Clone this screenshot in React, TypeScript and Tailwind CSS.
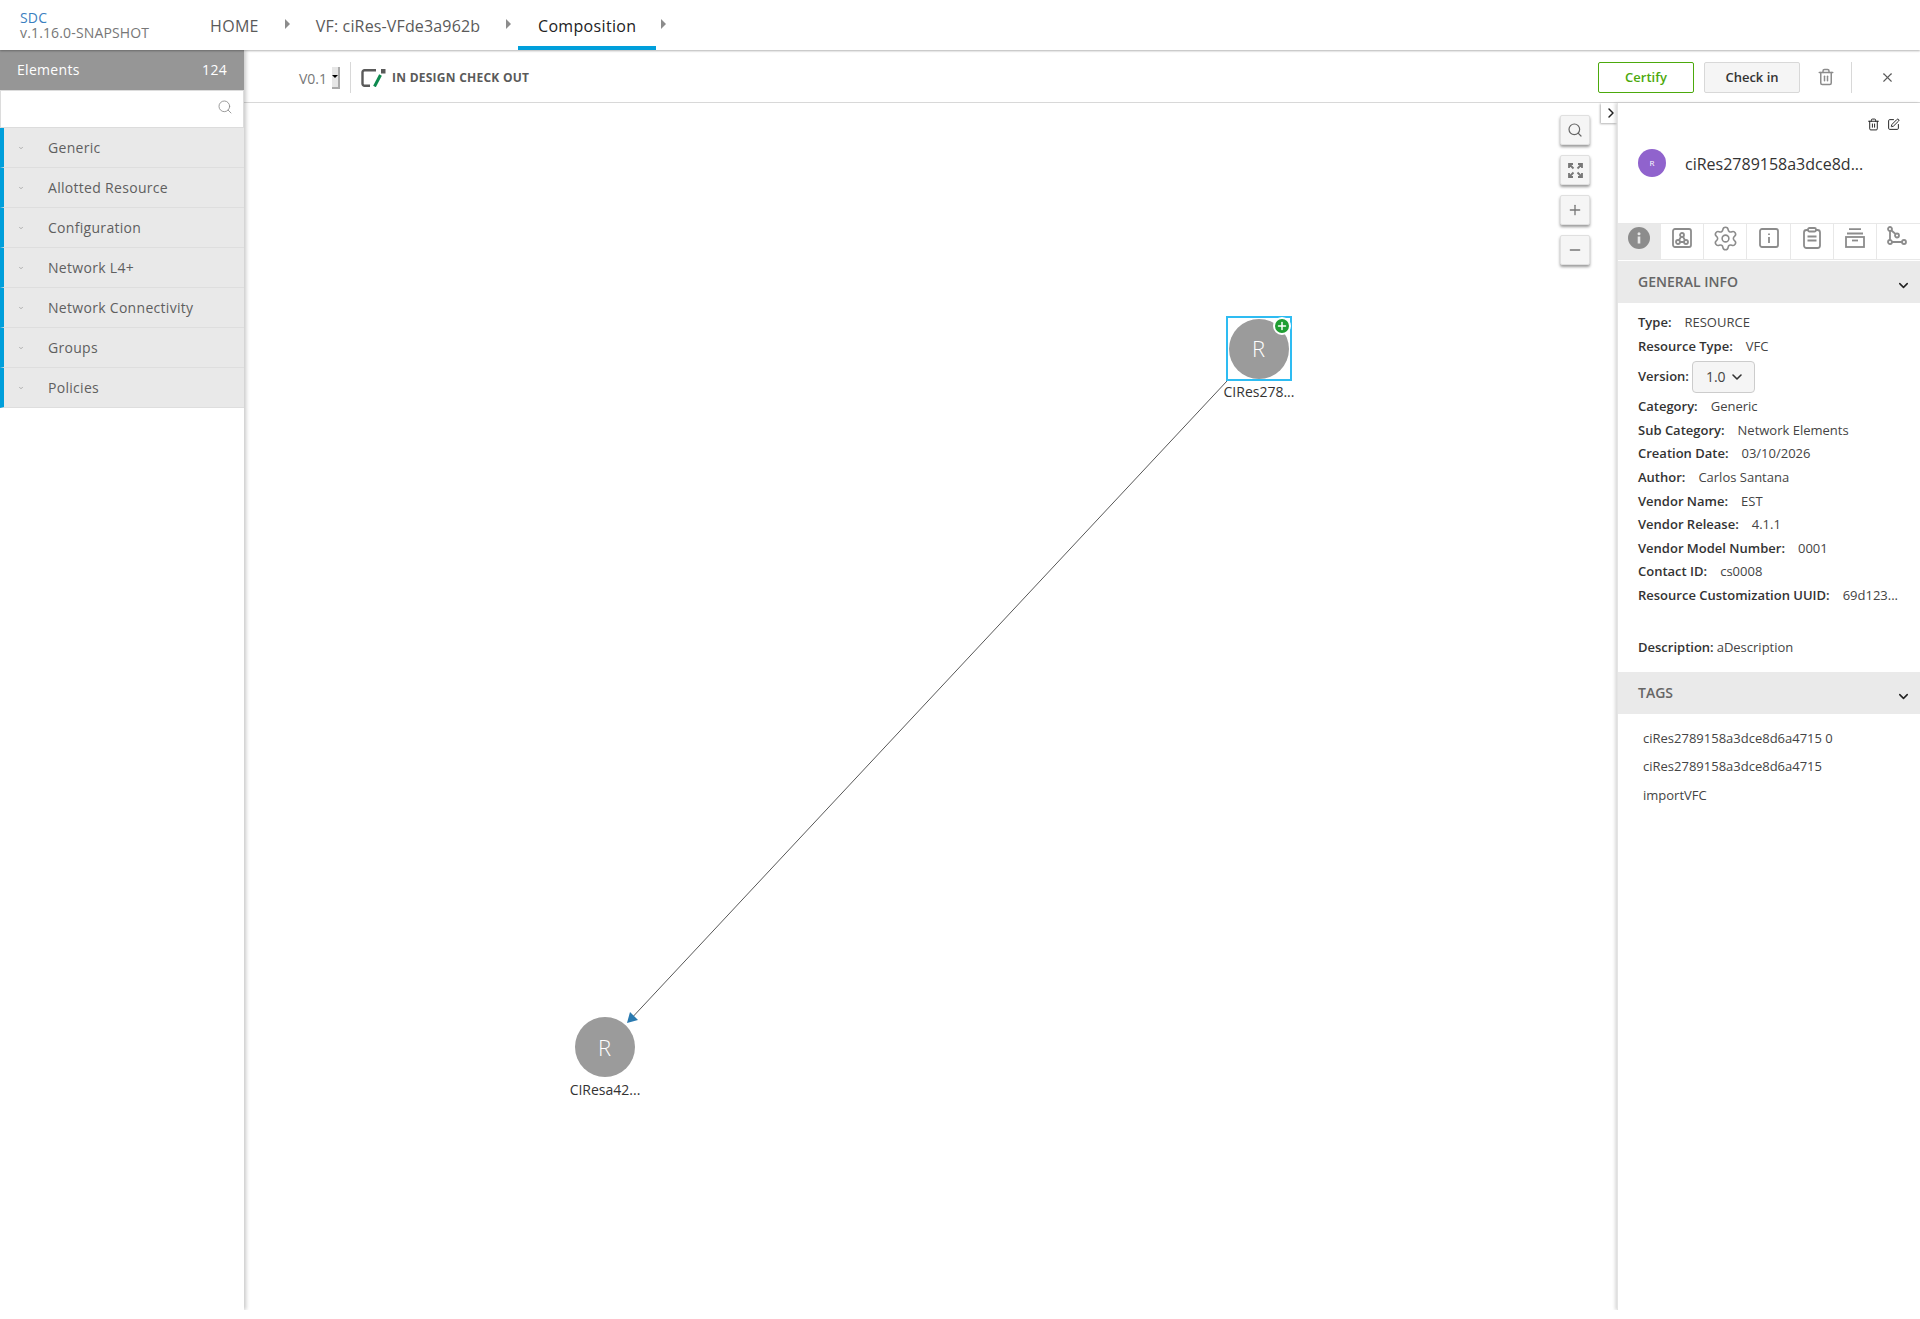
import { ChevronDown, ChevronRight, Minus, Plus, Search, Settings, SquarePen, Trash2, X } from 'lucide-react'

const categories = ['Generic', 'Allotted Resource', 'Configuration', 'Network L4+', 'Network Connectivity', 'Groups', 'Policies']

const infoRows = [
  { label: 'Category:', value: 'Generic' },
  { label: 'Sub Category:', value: 'Network Elements' },
  { label: 'Creation Date:', value: '03/10/2026' },
  { label: 'Author:', value: 'Carlos Santana' },
  { label: 'Vendor Name:', value: 'EST' },
  { label: 'Vendor Release:', value: '4.1.1' },
  { label: 'Vendor Model Number:', value: '0001' },
  { label: 'Contact ID:', value: 'cs0008' },
  { label: 'Resource Customization UUID:', value: '69d123...' },
]

const tags = ['ciRes2789158a3dce8d6a4715 0', 'ciRes2789158a3dce8d6a4715', 'importVFC']

function InfoFilled() {
  return (
    <svg width="22" height="22" viewBox="0 0 22 22">
      <circle cx="11" cy="11" r="11" fill="#8c8c8c" />
      <rect x="9.700" y="9.500" width="2.600" height="7" fill="#e6e6e6" />
      <circle cx="11" cy="6.800" r="1.500" fill="#e6e6e6" />
    </svg>
  )
}

function CompositionIcon() {
  return (
    <svg width="20" height="20" viewBox="0 0 20 20" fill="none" stroke="#8c8c8c" strokeWidth="1.800">
      <rect x="1" y="1" width="18" height="18" rx="2" />
      <circle cx="10" cy="7" r="2" />
      <circle cx="6" cy="14" r="2" />
      <circle cx="14" cy="14" r="2" />
      <path d="M9 8.800 7 12.200M11 8.800l2 3.400M8 14h4" />
    </svg>
  )
}

function SquareInfo() {
  return (
    <svg width="20" height="20" viewBox="0 0 20 20" fill="none" stroke="#8c8c8c" strokeWidth="1.800">
      <rect x="1" y="1" width="18" height="18" rx="2" />
      <path d="M10 9v6M10 5.500v1.500" />
    </svg>
  )
}

function ClipboardIcon() {
  return (
    <svg width="18" height="22" viewBox="0 0 18 22" fill="none" stroke="#8c8c8c" strokeWidth="1.800">
      <rect x="1" y="3" width="16" height="18" rx="2.500" />
      <rect x="5" y="1" width="8" height="3.500" rx="1.500" fill="#fff" />
      <path d="M4.500 9.500h9M4.500 13.500h9" />
    </svg>
  )
}

function ArchiveIcon() {
  return (
    <svg width="20" height="20" viewBox="0 0 20 20" fill="none" stroke="#8c8c8c" strokeWidth="1.800">
      <path d="M4 1.200h12M2 5.500h16" />
      <rect x="1" y="9" width="18" height="10" />
      <path d="M7 12.500h6" />
    </svg>
  )
}

function PathsIcon() {
  return (
    <svg width="20" height="22" viewBox="0 0 20 22" fill="none" stroke="#8c8c8c" strokeWidth="1.800">
      <circle cx="3" cy="3" r="2" />
      <circle cx="3" cy="16" r="2" />
      <circle cx="10" cy="9.500" r="2" />
      <circle cx="17" cy="16" r="2" />
      <path d="M3 5v9M5 16h10M4.500 4.500 8.500 8" />
    </svg>
  )
}

function ExpandIcon() {
  return (
    <svg width="15" height="15" viewBox="0 0 15 15" fill="none" stroke="#777" strokeWidth="1.800">
      <path d="M1 5V1h4M14 5V1h-4M1 10v4h4M14 10v4h-4M1.500 1.500l4 4M13.500 1.500l-4 4M1.500 13.500l4-4M13.500 13.500l-4-4" />
    </svg>
  )
}

function ZoomButton({ children }: { children: React.ReactNode }) {
  return (
    <div className="flex h-[30px] w-[30px] items-center justify-center rounded-[2px] border border-[#e0e0e0] bg-[#f5f5f5] shadow-[0_2px_3px_rgba(0,0,0,0.4)]">
      {children}
    </div>
  )
}

function SectionHeader({ title }: { title: string }) {
  return (
    <div className="flex h-[42px] items-center justify-between bg-[#eaeaea] pl-5 pr-[9px]">
      <span className="pb-px text-[14px] font-semibold text-[#666]">{title}</span>
      <ChevronDown className="mt-[7px] h-[15px] w-[15px] text-[#222]" strokeWidth={2.4} />
    </div>
  )
}

function InfoRow({ label, value }: { label: string; value: string }) {
  return (
    <div className="flex h-[23.6px] items-center whitespace-nowrap text-[13px] text-[#444]">
      <span className="mr-[13px] font-semibold text-[#333]">{label}</span>
      <span>{value}</span>
    </div>
  )
}

function NavArrow() {
  return <span className="mb-[3px] ml-[26px] h-0 w-0 border-y-[5px] border-l-[5px] border-y-transparent border-l-[#8c8c8c]" />
}

export default function App() {
  return (
    <div className="flex h-[1319px] w-[1920px] flex-col overflow-hidden bg-white font-['Open_Sans',sans-serif]">
      <header className="relative z-20 flex h-[50px] shrink-0 items-stretch bg-white shadow-[0_1px_2px_rgba(0,0,0,0.3)]">
        <div className="w-[210px] pl-5 pt-[10px] text-[14px] leading-[15px] tracking-[0.15px]">
          <div className="text-[#3b7fbf]">SDC</div>
          <div className="text-[#777]">v.1.16.0-SNAPSHOT</div>
        </div>
        <div className="flex items-center text-[16px] text-[#5a5a5a]">
          <span className="pt-px tracking-[0.33px]">HOME</span>
          <NavArrow />
          <span className="ml-[26px] pt-px tracking-[0.15px]">VF: ciRes-VFde3a962b</span>
          <NavArrow />
        </div>
        <div className="ml-[7px] flex w-[138px] items-center justify-center border-b-4 border-[#009fdb] pt-[6px] text-[16px] tracking-[0.33px] text-[#222]">
          Composition
        </div>
        <span className="ml-[5px] mt-[19px] h-0 w-0 border-y-[5px] border-l-[5px] border-y-transparent border-l-[#8c8c8c]" />
      </header>

      <div className="flex h-[1260px] shrink-0 overflow-hidden">
        <aside className="relative z-10 w-[244px] shrink-0 bg-white shadow-[2px_0_4px_rgba(0,0,0,0.22)]">
          <div className="flex h-[40px] items-center justify-between bg-[#969696] pb-[2px] pl-[17px] pr-[17px] text-[14px] font-medium tracking-[0.3px] text-white">
            <span>Elements</span>
            <span>124</span>
          </div>
          <div className="flex h-[38px] items-center justify-end border border-[#dcdcdc] bg-white pb-[4px] pr-[10px]">
            <Search className="h-4 w-4 text-[#8c8c8c]" strokeWidth={1.3} />
          </div>
          {categories.map((name) => (
            <div key={name} className="flex h-10 items-center border-b border-l-4 border-b-[#dedede] border-l-[#009fdb] bg-[#e9e9e9] text-[14px] tracking-[0.3px] text-[#5f5f5f]">
              <ChevronDown className="ml-[14px] mt-[1px] h-[6px] w-[6px] text-[#999]" strokeWidth={3} />
              <span className="ml-[24px]">{name}</span>
            </div>
          ))}
        </aside>

        <div className="flex min-w-0 flex-1 flex-col">
          <div className="flex h-[53px] shrink-0 items-center border-b border-[#d8d8d8] bg-white pr-[25px] pt-[2px]">
            <span className="ml-[55px] mt-[2px] text-[14px] text-[#777]">V0.1</span>
            <span className="ml-[5px] mt-[1px] flex h-[22px] w-[8px] items-center justify-center border-b-2 border-r-2 border-[#aaa] bg-[#e6e6e6]">
              <span className="h-0 w-0 border-x-[3px] border-t-[3px] border-x-transparent border-t-black" />
            </span>
            <span className="ml-[10px] h-[31px] w-px bg-[#d8d8d8]" />
            <svg className="ml-[10px] mt-[2px]" width="25" height="18" viewBox="0 0 25 18" fill="none">
              <path d="M15 1.300H3.500a2 2 0 0 0-2 2v11.400a2 2 0 0 0 2 2H9" stroke="#5a5a5a" strokeWidth="2.400" />
              <rect x="20" y="0" width="4.500" height="4.500" fill="#5a5a5a" />
              <path d="M19.500 6 13.500 17.500" stroke="#0d8a4f" strokeWidth="3" />
            </svg>
            <span className="ml-[6px] mt-[2px] text-[12px] font-bold tracking-[0.25px] text-[#5a5a5a]">IN DESIGN CHECK OUT</span>
            <div className="ml-auto flex items-center">
              <button className="h-[31px] w-[96px] rounded-[2px] border border-[#4ca90c] bg-white pt-[2px] text-[13px] font-semibold text-[#4ca90c]">Certify</button>
              <button className="ml-[10px] h-[31px] w-[96px] rounded-[2px] border border-[#d8d8d8] bg-[#f5f5f5] pt-[2px] text-[13px] font-semibold text-[#333]">Check in</button>
              <Trash2 className="ml-[17px] h-[18px] w-[18px] text-[#8c8c8c]" strokeWidth={2} />
              <span className="ml-4 h-[31px] w-px bg-[#d8d8d8]" />
              <X className="ml-[28px] h-[15px] w-[15px] text-[#5a5a5a]" strokeWidth={1.8} />
            </div>
          </div>

          <div className="flex min-h-0 flex-1">
            <div className="relative min-w-0 flex-1 bg-white">
              <svg className="absolute inset-0" width="1373" height="1200" fill="none">
                <path d="M983 278 384 919" stroke="#444" strokeWidth="0.900" />
                <path d="M383 920 386 909 394 917Z" fill="#2a7ab0" />
              </svg>

              <div className="absolute left-[982px] top-[213px] flex h-[65px] w-[66px] items-center justify-start border-2 border-[#2ebcf2] pl-px">
                <div className="flex h-[60px] w-[60px] items-center justify-center rounded-full bg-[#9b9b9b] pr-px text-[22px] font-light text-white">R</div>
                <div className="absolute right-[-1px] top-[-1px] flex h-[18px] w-[18px] items-center justify-center rounded-full border-2 border-white bg-[#1f9e32]">
                  <Plus className="h-3 w-3 text-white" strokeWidth={3} />
                </div>
              </div>
              <div className="absolute left-[955px] top-[279px] w-[120px] text-center text-[14px] leading-[20px] text-[#333]">CIRes278...</div>

              <div className="absolute left-[331px] top-[914px] flex h-[60px] w-[60px] items-center justify-center rounded-full bg-[#9b9b9b] pr-px text-[22px] font-light text-white">R</div>
              <div className="absolute left-[301px] top-[977px] w-[120px] text-center text-[14px] leading-[20px] text-[#333]">CIResa42...</div>

              <div className="absolute right-[27px] top-[12px] flex flex-col gap-[10px]">
                <ZoomButton><Search className="h-4 w-4 text-[#666]" strokeWidth={1.8} /></ZoomButton>
                <ZoomButton><ExpandIcon /></ZoomButton>
                <ZoomButton><Plus className="h-4 w-4 text-[#777]" strokeWidth={2} /></ZoomButton>
                <ZoomButton><Minus className="h-4 w-4 text-[#777]" strokeWidth={2} /></ZoomButton>
              </div>
              <div className="absolute right-0 top-0 flex h-[20px] w-4 items-center justify-center bg-white pl-[3px] shadow-[-1px_1px_2px_rgba(0,0,0,0.3)]">
                <ChevronRight className="h-4 w-4 shrink-0 text-[#222]" strokeWidth={2.2} />
              </div>
            </div>

            <aside className="relative w-[303px] shrink-0 border-l border-[#e4e4e4] bg-white shadow-[-2px_0_3px_rgba(0,0,0,0.15)]">
              <div className="flex justify-end gap-[7px] pr-[20px] pt-[15px] text-[#222]">
                <Trash2 className="h-[13px] w-[13px]" strokeWidth={1.8} />
                <SquarePen className="h-[13px] w-[13px]" strokeWidth={1.8} />
              </div>
              <div className="mt-[5px] flex h-[56px] items-center pl-5">
                <div className="mb-[2px] flex h-7 w-7 items-center justify-center rounded-full bg-[#9063cd] text-[8px] text-white">R</div>
                <span className="ml-[19px] text-[16px] text-[#333]">ciRes2789158a3dce8d...</span>
              </div>
              <div className="mt-[31px] flex h-[37px] border-y border-[#e8e8e8]">
                <div className="flex w-[43px] justify-center bg-[#e9e9e9] pr-px pt-[3px]"><InfoFilled /></div>
                <div className="flex w-[43px] justify-center border-r border-[#e8e8e8] pt-[4px]"><CompositionIcon /></div>
                <div className="flex w-[43px] justify-center border-r border-[#e8e8e8] pt-[1px]"><Settings className="h-[27px] w-[27px] text-[#8c8c8c]" strokeWidth={1.4} /></div>
                <div className="flex w-[44px] justify-center border-r border-[#e8e8e8] pt-[4px]"><SquareInfo /></div>
                <div className="flex w-[43px] justify-center border-r border-[#e8e8e8] pt-[3px]"><ClipboardIcon /></div>
                <div className="flex w-[43px] justify-center border-r border-[#e8e8e8] pt-[4px]"><ArchiveIcon /></div>
                <div className="flex w-[43px] justify-center pr-[3px] pt-[2px]"><PathsIcon /></div>
              </div>
              <div className="mt-[1px]"><SectionHeader title="GENERAL INFO" /></div>
              <div className="pl-5 pt-[8px]">
                <InfoRow label="Type:" value="RESOURCE" />
                <InfoRow label="Resource Type:" value="VFC" />
                <div className="flex h-[37px] items-center text-[13px]">
                  <span className="font-semibold text-[#333]">Version:</span>
                  <div className="ml-[3px] flex h-[32px] w-[63px] items-center gap-[3px] rounded-[4px] border border-[#ccc] bg-[#f5f5f5] pl-[13px] text-[14px] text-[#444]">
                    1.0
                    <ChevronDown className="h-4 w-4 text-[#333]" strokeWidth={2.4} />
                  </div>
                </div>
                {infoRows.map((row) => (
                  <InfoRow key={row.label} label={row.label} value={row.value} />
                ))}
                <div className="mt-[28px] flex h-[24px] items-center text-[13px] text-[#444]">
                  <span className="mr-[3px] font-semibold text-[#333]">Description:</span>
                  aDescription
                </div>
              </div>
              <div className="mt-[12px]"><SectionHeader title="TAGS" /></div>
              <div className="pl-[25px] pt-[10px] text-[13px] leading-[28.500px] text-[#444]">
                {tags.map((tag) => (
                  <div key={tag}>{tag}</div>
                ))}
              </div>
            </aside>
          </div>
        </div>
      </div>
    </div>
  )
}
